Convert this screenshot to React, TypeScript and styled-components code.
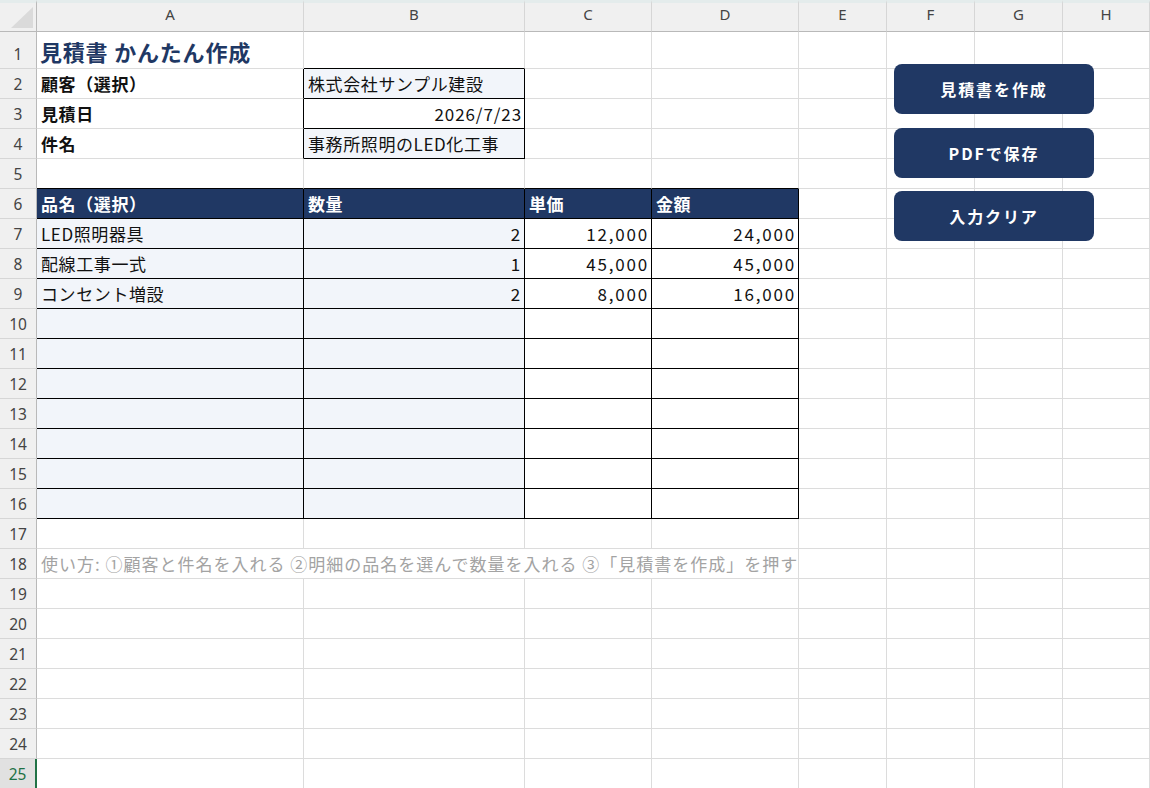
import React from "react";
import styled, { createGlobalStyle } from "styled-components";

const GlobalStyle = createGlobalStyle`
  html, body { margin: 0; padding: 0; background: #ffffff; overflow: hidden; }
  body { font-family: "Noto Sans CJK JP", "Noto Sans", sans-serif; }
  #root { width: 1150px; height: 788px; }
`;

const NAVY = "#203864";
const GRID = "#dcdcdc";
const LIGHT = "#f2f5fa";

const COLS = [267, 221, 127, 147, 88, 88, 88, 87];
const LETTERS = ["A", "B", "C", "D", "E", "F", "G", "H"];

const Sheet = styled.div`
  position: relative;
  display: grid;
  grid-template-columns: 37px ${COLS.map((c) => `${c}px`).join(" ")};
  grid-template-rows: 32px 37px repeat(24, 30px);
  width: 1150px;
  height: 788px;
  overflow: hidden;
  background: #ffffff;
`;

const Corner = styled.div`
  position: relative;
  box-sizing: border-box;
  background: #f0f0f0;
  border-top: 3px solid #e4ecec;
  border-right: 1px solid #b9b9b9;
  border-bottom: 1px solid #b9b9b9;
  &::after {
    content: "";
    position: absolute;
    right: 3px;
    bottom: 3px;
    width: 22px;
    height: 21px;
    background: #dadada;
    clip-path: polygon(100% 0, 100% 100%, 0 100%);
  }
`;

const ColHead = styled.div`
  box-sizing: border-box;
  background: #f0f0f0;
  border-top: 3px solid #e4ecec;
  border-right: 1px solid #d6d6d6;
  border-bottom: 1px solid #b9b9b9;
  display: flex;
  align-items: center;
  justify-content: center;
  padding-bottom: 7px;
  font-family: "Noto Sans", "Liberation Sans", sans-serif;
  font-size: 15px;
  color: #444444;
`;

const RowHead = styled.div<{ $selected?: boolean }>`
  box-sizing: border-box;
  background: ${(p) => (p.$selected ? "#e1e1e1" : "#f0f0f0")};
  border-right: ${(p) => (p.$selected ? "2px solid #217346" : "1px solid #b9b9b9")};
  border-bottom: 1px solid #d6d6d6;
  display: flex;
  align-items: flex-end;
  justify-content: center;
  padding-bottom: 3px;
  line-height: 22px;
  font-family: "Noto Sans", "Liberation Sans", sans-serif;
  font-size: 15.5px;
  color: ${(p) => (p.$selected ? "#1e7145" : "#444444")};
`;

type CellProps = {
  $rb?: boolean;
  $bb?: boolean;
  $bg?: string;
  $align?: "left" | "right";
  $bold?: boolean;
  $color?: string;
  $span?: number;
  $ls?: number;
};

const Cell = styled.div<CellProps>`
  box-sizing: border-box;
  grid-column: ${(p) => (p.$span ? `span ${p.$span}` : "auto")};
  border-right: 1px solid ${(p) => (p.$rb ? "#000000" : GRID)};
  border-bottom: 1px solid ${(p) => (p.$bb ? "#000000" : GRID)};
  background: ${(p) => p.$bg || "#ffffff"};
  display: flex;
  align-items: center;
  justify-content: ${(p) => (p.$align === "right" ? "flex-end" : "flex-start")};
  padding: 0 ${(p) => (p.$align === "right" ? 2 : 3)}px 1px 4px;
  font-size: 17px;
  letter-spacing: ${(p) => (p.$ls ?? 0.6)}px;
  font-weight: ${(p) => (p.$bold ? 700 : 400)};
  color: ${(p) => p.$color || "#111111"};
  white-space: nowrap;
  overflow: visible;
`;

const Title = styled.span`
  font-size: 22px;
  font-weight: 700;
  color: #1f3864;
  letter-spacing: 0.8px;
  margin-left: -1px;
  margin-top: 2px;
`;

const ButtonStack = styled.div`
  position: absolute;
  left: 894px;
  top: 64px;
  display: flex;
  flex-direction: column;
  gap: 13.5px;
`;

const MacroButton = styled.div`
  width: 200px;
  height: 50px;
  border-radius: 8px;
  background: ${NAVY};
  color: #ffffff;
  display: flex;
  align-items: center;
  justify-content: center;
  font-family: "Noto Sans CJK JP", sans-serif;
  font-size: 16px;
  font-weight: 700;
  letter-spacing: 1.9px;
`;

type CellDef = {
  text?: React.ReactNode;
  rb?: boolean;
  bb?: boolean;
  bg?: string;
  align?: "left" | "right";
  bold?: boolean;
  color?: string;
  span?: number;
  ls?: number;
};

const items = [
  { name: "LED照明器具", qty: "2", price: "12,000", amount: "24,000" },
  { name: "配線工事一式", qty: "1", price: "45,000", amount: "45,000" },
  { name: "コンセント増設", qty: "2", price: "8,000", amount: "16,000" },
];

function buildRows(): CellDef[][] {
  const rows: CellDef[][] = [];
  const fill = (cells: CellDef[]) => {
    const used = cells.reduce((s, c) => s + (c.span || 1), 0);
    const out = [...cells];
    for (let i = used; i < 8; i++) out.push({});
    return out;
  };
  rows.push(fill([{ text: <Title>見積書 かんたん作成</Title> }, { bb: true }]));
  rows.push(fill([{ text: "顧客（選択）", bold: true, rb: true }, { text: "株式会社サンプル建設", bg: LIGHT, rb: true, bb: true }]));
  rows.push(fill([{ text: "見積日", bold: true, rb: true }, { text: "2026/7/23", align: "right", rb: true, bb: true, ls: 0.9 }]));
  rows.push(fill([{ text: "件名", bold: true, rb: true }, { text: "事務所照明のLED化工事", bg: LIGHT, rb: true, bb: true }]));
  rows.push(fill([{ bb: true }, { bb: true }, { bb: true }, { bb: true }]));
  rows.push(
    fill(
      ["品名（選択）", "数量", "単価", "金額"].map((t) => ({
        text: t,
        bg: NAVY,
        color: "#ffffff",
        bold: true,
        rb: true,
        bb: true,
      }))
    )
  );
  for (let i = 0; i < 10; i++) {
    const it = items[i];
    rows.push(
      fill([
        { text: it?.name, bg: LIGHT, rb: true, bb: true },
        { text: it?.qty, bg: LIGHT, rb: true, bb: true, align: "right", ls: 1.8 },
        { text: it?.price, rb: true, bb: true, align: "right", ls: 1.8 },
        { text: it?.amount, rb: true, bb: true, align: "right", ls: 1.8 },
      ])
    );
  }
  rows.push(fill([]));
  rows.push(
    fill([
      {
        text: "使い方: ①顧客と件名を入れる ②明細の品名を選んで数量を入れる ③「見積書を作成」を押す",
        color: "#a3a3a3",
        span: 4,
        ls: 1.0,
      },
    ])
  );
  for (let i = 19; i <= 25; i++) rows.push(fill([]));
  return rows;
}

export default function App() {
  const rows = buildRows();
  return (
    <>
      <GlobalStyle />
      <Sheet>
        <Corner />
        {LETTERS.map((l) => (
          <ColHead key={l}>{l}</ColHead>
        ))}
        {rows.map((cells, ri) => (
          <React.Fragment key={ri}>
            <RowHead $selected={ri === 24}>{ri + 1}</RowHead>
            {cells.map((c, ci) => (
              <Cell
                key={ci}
                $rb={c.rb}
                $bb={c.bb}
                $bg={c.bg}
                $align={c.align}
                $bold={c.bold}
                $color={c.color}
                $span={c.span}
                $ls={c.ls}
              >
                {c.text}
              </Cell>
            ))}
          </React.Fragment>
        ))}
        <ButtonStack>
          <MacroButton>見積書を作成</MacroButton>
          <MacroButton>PDFで保存</MacroButton>
          <MacroButton>入力クリア</MacroButton>
        </ButtonStack>
      </Sheet>
    </>
  );
}
